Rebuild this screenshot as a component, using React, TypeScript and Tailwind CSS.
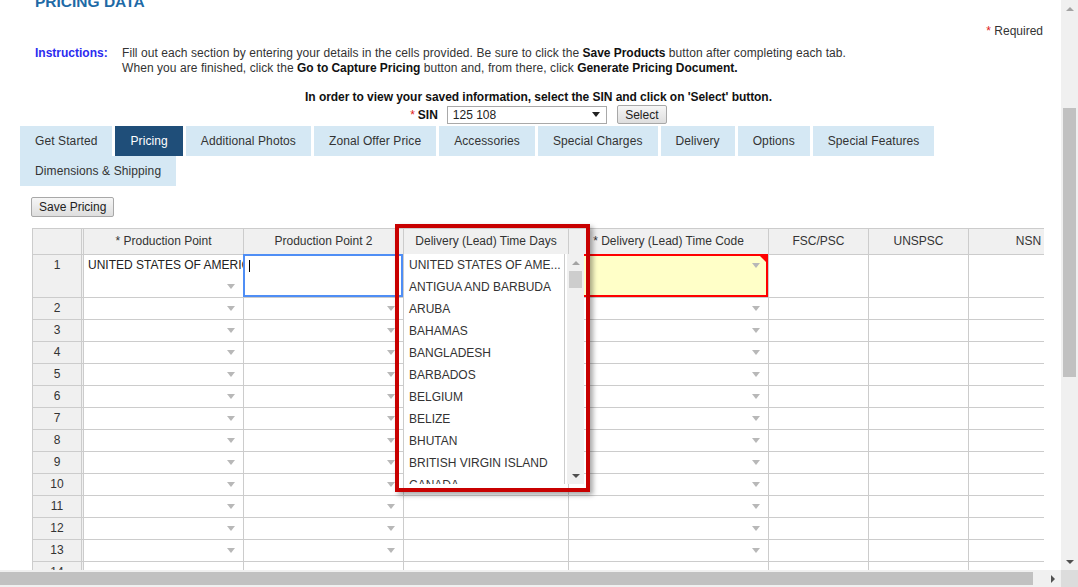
import * as React from "react";

type Col = { title: string; w: string; kind: "combo" | "text" };

const COLS: Col[] = [
  { title: "* Production Point", w: "w-[160px]", kind: "combo" },
  { title: "Production Point 2", w: "w-[160px]", kind: "combo" },
  { title: "Delivery (Lead) Time Days", w: "w-[165px]", kind: "text" },
  { title: "* Delivery (Lead) Time Code", w: "w-[200px]", kind: "combo" },
  { title: "FSC/PSC", w: "w-[100px]", kind: "text" },
  { title: "UNSPSC", w: "w-[100px]", kind: "text" },
  { title: "NSN", w: "w-[120px]", kind: "text" },
];

const TABS = [
  "Get Started",
  "Pricing",
  "Additional Photos",
  "Zonal Offer Price",
  "Accessories",
  "Special Charges",
  "Delivery",
  "Options",
  "Special Features",
  "Dimensions & Shipping",
];

const COUNTRIES = [
  "UNITED STATES OF AME...",
  "ANTIGUA AND BARBUDA",
  "ARUBA",
  "BAHAMAS",
  "BANGLADESH",
  "BARBADOS",
  "BELGIUM",
  "BELIZE",
  "BHUTAN",
  "BRITISH VIRGIN ISLAND",
  "CANADA",
];

const ROWS = Array.from({ length: 14 }, (_, i) => i + 1);

function DropArrow() {
  return <span className="block h-0 w-0 border-x-[4px] border-t-[5px] border-x-transparent border-t-[#b8b8b8]" />;
}

function UpArrow({ color = "border-b-[#a3a3a3]" }: { color?: string }) {
  return <span className={`block h-0 w-0 border-x-[4px] border-b-[4px] border-x-transparent ${color}`} />;
}

function DownArrow() {
  return <span className="block h-0 w-0 border-x-[4px] border-t-[4px] border-x-transparent border-t-[#505050]" />;
}

function GrayButton({ children, className = "" }: { children: React.ReactNode; className?: string }) {
  return (
    <button
      type="button"
      className={`rounded-[2px] border border-[#a8a8a8] bg-linear-to-b from-[#f6f6f6] to-[#dedede] text-[12px] text-[#222] ${className}`}
    >
      {children}
    </button>
  );
}

function BodyCell({ col, ci, row }: { col: Col; ci: number; row: number }) {
  const base = `relative shrink-0 border-r border-[#ccc] ${col.w}`;

  if (row === 1) {
    if (ci === 0) {
      return (
        <div className={`${base} flex flex-col`}>
          <div className="h-[21px] overflow-hidden whitespace-nowrap pl-[4px] leading-[21px] text-[#222]">
            UNITED STATES OF AMERICA
          </div>
          <div className="flex h-[21px] items-center justify-end pr-[8px]">
            <DropArrow />
          </div>
        </div>
      );
    }
    if (ci === 1) {
      return (
        <div className={base}>
          <div className="absolute -top-px -left-px right-0 bottom-0 border-2 border-[#4f8ef5]" />
          <div className="absolute top-[5px] left-[5px] h-[12px] w-px bg-black" />
        </div>
      );
    }
    if (ci === 3) {
      return (
        <div className={`${base} bg-[#ffffc8]`}>
          <div className="flex h-[21px] items-center justify-end pr-[8px]">
            <DropArrow />
          </div>
          <div className="absolute -top-px -left-px right-0 bottom-0 border-2 border-[#ff0000]">
            <span className="absolute top-0 right-0 h-0 w-0 border-t-[6px] border-l-[6px] border-l-transparent border-t-[#ff0000]" />
          </div>
        </div>
      );
    }
    return <div className={base} />;
  }

  if (col.kind === "combo") {
    return (
      <div className={`${base} flex items-center justify-end pr-[8px]`}>
        <DropArrow />
      </div>
    );
  }
  return <div className={base} />;
}

function Grid() {
  return (
    <div className="relative mt-[11px] ml-[32px]">
      <div className="w-[1012px] overflow-hidden border-l border-[#ccc]">
        <div className="flex h-[27px] w-max border-y border-[#ccc] bg-[#f0f0f0] text-[#333]">
          <div className="w-[51px] shrink-0 border-r-[3px] border-double border-[#ccc]" />
          {COLS.map((c) => (
            <div key={c.title} className={`shrink-0 border-r border-[#ccc] text-center leading-[25px] ${c.w}`}>
              {c.title}
            </div>
          ))}
        </div>
        {ROWS.map((r) => (
          <div key={r} className={`flex w-max border-b border-[#ccc] ${r === 1 ? "h-[43px]" : "h-[22px]"}`}>
            <div className="w-[51px] shrink-0 border-r-[3px] border-double border-[#ccc] bg-[#f0f0f0] text-center leading-[21px] text-[#333]">
              {r}
            </div>
            {COLS.map((c, ci) => (
              <BodyCell key={c.title} col={c} ci={ci} row={r} />
            ))}
          </div>
        ))}
      </div>

      {/* open autocomplete list */}
      <div className="absolute top-[26px] left-[371px] flex h-[230px] w-[181px] bg-white">
        <ul className="h-full w-[162px] overflow-hidden border-x border-[#ccc] text-[#333]">
          {COUNTRIES.map((c) => (
            <li key={c} className="h-[22px] whitespace-nowrap pl-[5px] leading-[22px]">
              {c}
            </li>
          ))}
        </ul>
        <div className="ml-[2px] flex w-[17px] flex-col bg-[#f0f0f0]">
          <div className="flex h-[17px] items-center justify-center">
            <UpArrow />
          </div>
          <div className="mx-[2px] h-[17px] bg-[#cdcdcd]" />
          <div className="flex-1" />
          <div className="flex h-[17px] items-center justify-center">
            <DownArrow />
          </div>
        </div>
      </div>

      {/* red callout */}
      <div className="pointer-events-none absolute -top-[4px] left-[363px] h-[268px] w-[195px] border-4 border-[#c80000] shadow-[3px_3px_5px_rgba(0,0,0,0.35)]" />
    </div>
  );
}

export default function App() {
  return (
    <div className="flex h-[587px] w-[1078px] flex-col overflow-hidden bg-white font-['Liberation_Sans',Arial,sans-serif] text-[12px] text-[#333]">
      <div className="flex h-[570px]">
        <main className="w-[1061px] shrink-0 overflow-hidden">
          <h1 className="-mt-[7px] pl-[35px] text-[15.5px] leading-[18px] font-bold text-[#1e6aa6]">PRICING DATA</h1>

          <div className="mt-[13px] pr-[18px] text-right leading-[14px]">
            <span className="text-[#e02020]">*</span> Required
          </div>

          <div className="mt-[8px] flex leading-[15px]">
            <div className="w-[122px] shrink-0 pl-[35px] font-bold text-[#2b2bef]">Instructions:</div>
            <div className="tracking-[0.07px] text-[#333]">
              <p>
                Fill out each section by entering your details in the cells provided. Be sure to click the{" "}
                <b className="tracking-[-0.04px] text-[#111]">Save Products</b> button after completing each tab.
              </p>
              <p>
                When you are finished, click the{" "}
                <b className="tracking-[-0.04px] text-[#111]">Go to Capture Pricing</b> button and, from there, click{" "}
                <b className="tracking-[-0.04px] text-[#111]">Generate Pricing Document.</b>
              </p>
            </div>
          </div>

          <div className="pl-[16px]">
            <p className="mt-[14px] text-center leading-[14px] font-bold tracking-[-0.05px] text-[#111]">
              In order to view your saved information, select the SIN and click on &apos;Select&apos; button.
            </p>
            <div className="mt-px flex h-[19px] items-center justify-center">
              <span className="text-[#e02020]">*</span>
              <span className="ml-[3px] font-bold text-[#111]">SIN</span>
              <div className="ml-[9px] flex h-[18px] w-[160px] items-center justify-between border border-[#a9a9a9] pr-[6px] pl-[5px] text-[#222]">
                <span>125 108</span>
                <span className="block h-0 w-0 border-x-[4px] border-t-[5px] border-x-transparent border-t-[#222]" />
              </div>
              <GrayButton className="ml-[10px] h-[19px] w-[50px]">Select</GrayButton>
            </div>
          </div>

          <nav className="mt-[2px] flex flex-wrap gap-x-[3px] pl-[20px]">
            {TABS.map((t) => (
              <div
                key={t}
                className={[
                  "h-[30px] px-[15px] leading-[30px] tracking-[0.1px] whitespace-nowrap",
                  t === "Pricing" ? "bg-[#1f4e79] text-white" : "bg-[#d5e8f4] text-[#333]",
                ].join(" ")}
              >
                {t}
              </div>
            ))}
          </nav>

          <GrayButton className="mt-[11px] ml-[31px] block h-[20px] px-[7px]">Save Pricing</GrayButton>

          <Grid />
        </main>

        {/* page scrollbar */}
        <div className="flex w-[17px] flex-col bg-[#f0f0f0]">
          <div className="flex h-[17px] items-center justify-center">
            <UpArrow />
          </div>
          <div className="h-[91px]" />
          <div className="mx-[2px] h-[269px] bg-[#c1c1c1]" />
          <div className="flex-1" />
          <div className="flex h-[17px] items-center justify-center">
            <DownArrow />
          </div>
        </div>
      </div>

      <div className="flex h-[17px]">
        <div className="flex w-[1061px] items-center bg-[#f0f0f0]">
          <div className="h-[13px] w-[1033px] bg-[#c1c1c1]" />
          <div className="flex-1" />
          <div className="flex h-[17px] w-[17px] items-center justify-center">
            <span className="block h-0 w-0 border-y-[4px] border-l-[4px] border-y-transparent border-l-[#505050]" />
          </div>
        </div>
        <div className="w-[17px] bg-[#dcdcdc]" />
      </div>
    </div>
  );
}
